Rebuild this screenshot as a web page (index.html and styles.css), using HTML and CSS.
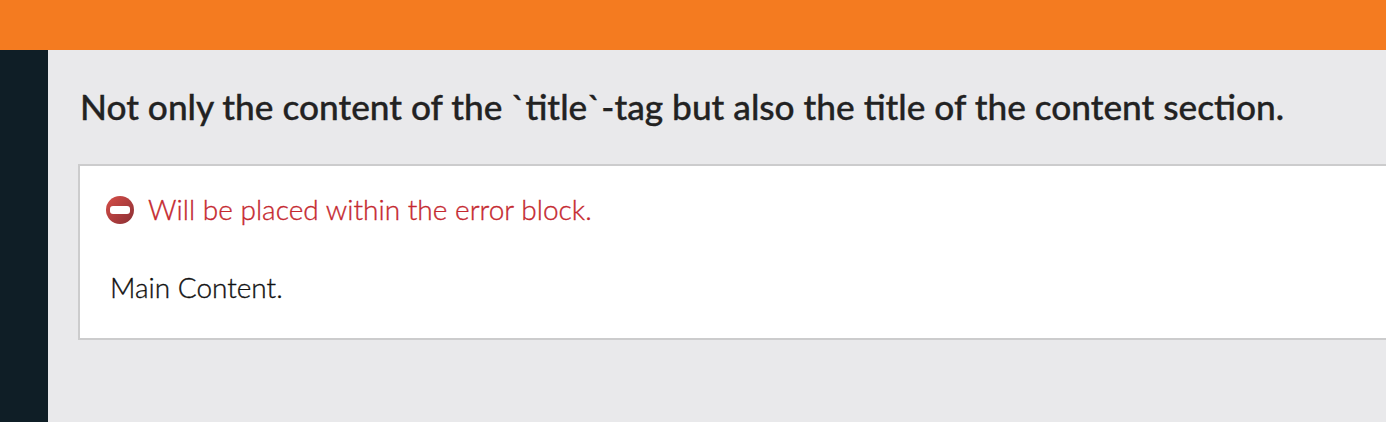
FILE: index.html
```html
<!DOCTYPE html>
<html lang="en">
<head>
<meta charset="utf-8">
<title>Content section</title>
<link rel="stylesheet" href="styles.css">
</head>
<body>
<header class="topbar"></header>
<div class="layout">
<nav class="sidebar"></nav>
<main class="content">
<h1 class="title">Not only the content of the `title`-tag but also the title of the content section.</h1>
<section class="panel">
<div class="error">
<svg class="error-icon" viewBox="0 0 28 28"><defs><linearGradient id="g" x1="0" y1="0" x2="1" y2="1"><stop offset="0.1" stop-color="#cf4b46"/><stop offset="0.9" stop-color="#923236"/></linearGradient></defs><circle cx="14" cy="14" r="14" fill="url(#g)"/><rect x="4" y="10" width="20" height="8" rx="3" fill="#fff"/></svg>
<span class="error-text">Will be placed within the error block.</span>
</div>
<p class="main-text">Main Content.</p>
</section>
</main>
</div>
</body>
</html>
```

FILE: styles.css
```css
* { box-sizing: border-box; }
body { margin: 0; height: 422px; overflow: hidden; display: flex; flex-direction: column; background: #e9e9eb; font-family: Lato, sans-serif; color: #222; }
.topbar { height: 50px; background: #f47b20; flex: none; }
.layout { flex: 1; display: flex; }
.sidebar { width: 48px; background: #0f1e26; flex: none; }
.content { flex: 1; padding: 35px 0 0 30px; min-width: 0; }
.title { margin: 0 0 35px 2px; font-size: 35.25px; line-height: 44px; font-weight: 500; white-space: nowrap; -webkit-text-stroke: 0.35px currentColor; }
.panel { height: 176px; border: 2px solid #cccccd; border-right: 0; background: #fff; padding: 24px 0 0 26px; }
.error { display: flex; align-items: center; height: 40px; gap: 14px; color: #c5282f; }
.error-icon { width: 28px; height: 28px; }
.error-text, .main-text { font-size: 28px; line-height: 38px; font-weight: 300; white-space: nowrap; -webkit-text-stroke: 0.35px currentColor; }
.error-text { margin-top: -2px; letter-spacing: 0.02px; }
.main-text { margin: 38px 0 0 4px; color: #111; }
```
